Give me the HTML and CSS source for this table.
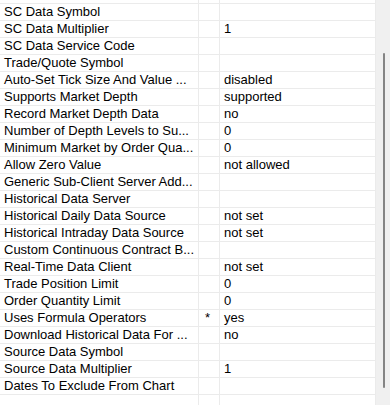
FILE: index.html
```html
<!DOCTYPE html>
<html>
<head>
<meta charset="utf-8">
<link rel="stylesheet" href="styles.css">
</head>
<body>
<div class="frame">
  <div class="grid">
    <div class="row partial"><div class="c name"></div><div class="c flag"></div><div class="c val"></div></div>
    <div class="row"><div class="c name">SC Data Symbol</div><div class="c flag"></div><div class="c val"></div></div>
    <div class="row"><div class="c name">SC Data Multiplier</div><div class="c flag"></div><div class="c val">1</div></div>
    <div class="row"><div class="c name">SC Data Service Code</div><div class="c flag"></div><div class="c val"></div></div>
    <div class="row"><div class="c name">Trade/Quote Symbol</div><div class="c flag"></div><div class="c val"></div></div>
    <div class="row"><div class="c name">Auto-Set Tick Size And Value ...</div><div class="c flag"></div><div class="c val">disabled</div></div>
    <div class="row"><div class="c name">Supports Market Depth</div><div class="c flag"></div><div class="c val">supported</div></div>
    <div class="row"><div class="c name">Record Market Depth Data</div><div class="c flag"></div><div class="c val">no</div></div>
    <div class="row"><div class="c name">Number of Depth Levels to Su...</div><div class="c flag"></div><div class="c val">0</div></div>
    <div class="row"><div class="c name">Minimum Market by Order Qua...</div><div class="c flag"></div><div class="c val">0</div></div>
    <div class="row"><div class="c name">Allow Zero Value</div><div class="c flag"></div><div class="c val">not allowed</div></div>
    <div class="row"><div class="c name">Generic Sub-Client Server Add...</div><div class="c flag"></div><div class="c val"></div></div>
    <div class="row"><div class="c name">Historical Data Server</div><div class="c flag"></div><div class="c val"></div></div>
    <div class="row"><div class="c name">Historical Daily Data Source</div><div class="c flag"></div><div class="c val">not set</div></div>
    <div class="row"><div class="c name">Historical Intraday Data Source</div><div class="c flag"></div><div class="c val">not set</div></div>
    <div class="row"><div class="c name">Custom Continuous Contract B...</div><div class="c flag"></div><div class="c val"></div></div>
    <div class="row"><div class="c name">Real-Time Data Client</div><div class="c flag"></div><div class="c val">not set</div></div>
    <div class="row"><div class="c name">Trade Position Limit</div><div class="c flag"></div><div class="c val">0</div></div>
    <div class="row"><div class="c name">Order Quantity Limit</div><div class="c flag"></div><div class="c val">0</div></div>
    <div class="row"><div class="c name">Uses Formula Operators</div><div class="c flag">*</div><div class="c val">yes</div></div>
    <div class="row"><div class="c name">Download Historical Data For ...</div><div class="c flag"></div><div class="c val">no</div></div>
    <div class="row"><div class="c name">Source Data Symbol</div><div class="c flag"></div><div class="c val"></div></div>
    <div class="row"><div class="c name">Source Data Multiplier</div><div class="c flag"></div><div class="c val">1</div></div>
    <div class="row"><div class="c name">Dates To Exclude From Chart</div><div class="c flag"></div><div class="c val"></div></div>
    <div class="row"><div class="c name"></div><div class="c flag"></div><div class="c val"></div></div>
  </div>
  <div class="scrollbar"><div class="thumb"></div></div>
</div>
</body>
</html>
```
FILE: styles.css
```css
* { box-sizing: border-box; }
html, body { margin: 0; padding: 0; background: #fff; }
body {
  font-family: "Liberation Sans", Arial, sans-serif;
  font-size: 13px;
  color: #000;
  width: 390px;
  height: 405px;
  overflow: hidden;
}
.frame {
  display: flex;
  height: 405px;
  overflow: hidden;
}
.grid {
  width: 376px;
  flex: none;
  display: flex;
  flex-direction: column;
  overflow: hidden;
}
.row {
  display: grid;
  grid-template-columns: 199px 21px 1fr;
  height: 17px;
  flex: none;
  border-bottom: 1px solid #ebebeb;
}
.row.partial { height: 4px; }
.c {
  height: 100%;
  line-height: 16px;
  padding-left: 4px;
  white-space: nowrap;
  overflow: hidden;
}
.name, .flag { border-right: 1px solid #ebebeb; }
.val { border-right: 1px solid #ebebeb; }
.flag { padding-left: 6px; }
.scrollbar {
  flex: 1;
  background: #f0f0f0;
  display: flex;
  justify-content: flex-start;
  padding: 53px 0 17px 7px;
}
.thumb {
  width: 2px;
  background: #858585;
  border-radius: 1px;
}
```
